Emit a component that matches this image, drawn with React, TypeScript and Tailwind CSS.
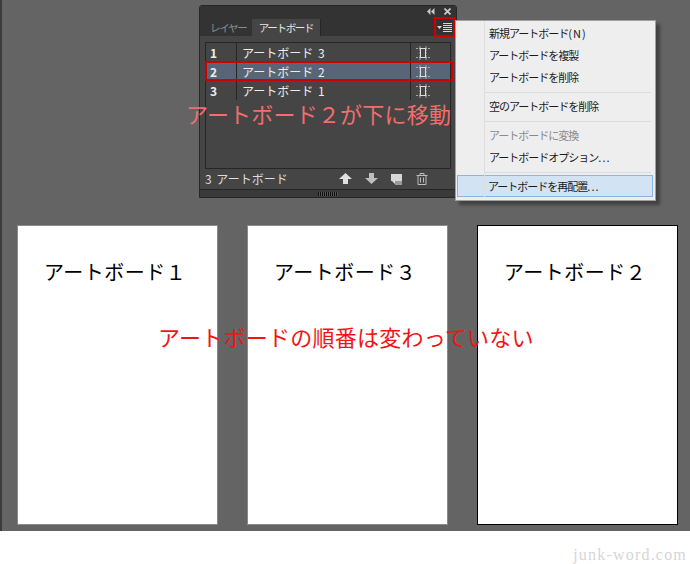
const jp = { fontFamily: '"Noto Sans CJK JP", "Liberation Sans", sans-serif' };

function ArtboardIcon() {
  return (
    <svg width="16" height="16" viewBox="0 0 16 16" fill="none">
      <path d="M1 3.500h14M1 12.500h14M5 1v14M11 1v14" stroke="#a8a8a8" strokeDasharray="2 1" />
      <rect x="5.500" y="3.500" width="5" height="9" stroke="#dcdcdc" />
    </svg>
  );
}

function PanelRow({ no, name, active }: { no: string; name: string; active?: boolean }) {
  return (
    <div className={`flex h-[19px] items-center text-[12px] text-[#ececec] ${active ? "bg-[#5a6478]" : ""}`}>
      <div className="flex h-full w-[31px] items-center border-r border-[#262626] pl-[4px] font-bold">{no}</div>
      <div className="flex h-full w-[174px] items-center border-r border-[#262626] pl-[5px] [word-spacing:2px]">{name}</div>
      <div className="flex flex-1 items-center justify-start pl-[4px]">
        <ArtboardIcon />
      </div>
    </div>
  );
}

function Panel() {
  return (
    <div className="absolute left-[197px] top-[5px] h-[193px] w-[258px] rounded-t-[3px] border border-[#262626] bg-[#454545]" style={jp}>
      {/* title bar */}
      <div className="flex h-[11px] items-center justify-end gap-[9px] bg-[#333333] pr-[5px]">
        <svg width="8" height="7" viewBox="0 0 8 7" fill="#c8c8c8">
          <path d="M3.500 0v7L0 3.500zM7.500 0v7L4 3.500z" />
        </svg>
        <svg width="7" height="7" viewBox="0 0 7 7" stroke="#d0d0d0" strokeWidth="1.6">
          <path d="M0.500 0.500l6 6M6.500 0.500l-6 6" />
        </svg>
      </div>
      {/* tabs */}
      <div className="relative flex h-[19px] bg-[#333333] pt-[2px] text-[10.5px]">
        <div className="flex w-[52px] items-center whitespace-nowrap pl-[10px] tracking-[-1.3px] text-[#8c8c8c]">レイヤー</div>
        <div className="flex w-[69px] items-center justify-center whitespace-nowrap border-r border-[#262626] bg-[#454545] tracking-[-1.3px] text-[#e6e6e6]">
          アートボード
        </div>
        <div className="absolute right-[1px] top-0 flex h-[20px] w-[21px] items-center justify-center border-2 border-[#d00000] bg-[#333333]">
          <svg width="15" height="9" viewBox="0 0 15 9" fill="#d8d8d8">
            <path d="M0 3h5L2.500 6zM6 0h9v1H6zM6 2h9v1H6zM6 4h9v1H6zM6 6h9v1H6zM6 8h9v1H6z" />
          </svg>
        </div>
      </div>
      {/* list */}
      <div className="mx-[5px] mt-[6px] h-[127px] w-[246px] border border-[#262626] bg-[#454545]">
        <PanelRow no="1" name="アートボード 3" />
        <PanelRow no="2" name="アートボード 2" active />
        <PanelRow no="3" name="アートボード 1" />
      </div>
      {/* footer */}
      <div className="flex h-[20px] items-center pl-[5px] text-[12px] text-[#dcdcdc]">
        <span className="w-[134px] [word-spacing:2px]">3 アートボード</span>
        <div className="flex items-center gap-[13px]">
          <svg width="13" height="12" viewBox="0 0 13 12" fill="#e0e0e0">
            <path d="M6.500 0L13 6H9v5H4V6H0z" />
          </svg>
          <svg width="13" height="12" viewBox="0 0 13 12" fill="#bdbdbd">
            <path d="M4 0h5v5h4l-6.500 6L0 5h4z" />
          </svg>
          <svg width="12" height="11" viewBox="0 0 12 11">
            <path d="M0 0h11v7H0z" fill="#d6d6d6" />
            <path d="M4 7h7v4H4z" fill="#9a9a9a" />
            <path d="M1 7h3v3z" fill="#e0e0e0" />
          </svg>
          <svg width="12" height="12" viewBox="0 0 12 12" fill="none" stroke="#bdbdbd">
            <path d="M0.500 2.500h11M4 2.500V0.500h4v2M2 2.500v9h8v-9M4.500 4.500v5M7.500 4.500v5" />
          </svg>
        </div>
      </div>
      {/* grip */}
      <div className="flex h-[8px] items-center justify-center border-t border-[#262626] bg-[#3a3a3a]">
        <div className="h-[4px] w-[20px] bg-[repeating-linear-gradient(90deg,#111111_0,#111111_1px,#555555_1px,#555555_2px)]" />
      </div>
      <div className="absolute bottom-[9px] right-[2px] h-[6px] w-[6px] bg-[radial-gradient(#888888_40%,transparent_45%)] bg-[length:2px_2px]" />
    </div>
  );
}

function MenuSep() {
  return <div className="mb-[2px] ml-[28px] mr-[4px] mt-[4px] h-px bg-[#dcdcdc]" />;
}

function MenuItem({ label, suffix, disabled, active }: { label: string; suffix?: string; disabled?: boolean; active?: boolean }) {
  return (
    <div
      className={`flex h-[22px] items-center text-[11px] tracking-[-1px] ${disabled ? "text-[#8a8a8a]" : "text-[#1a1a1a]"} ${
        active ? "ml-[1px] mr-[2px] border border-[#8db5dc] bg-[#d2e3f3] pl-[30px]" : "pl-[33px]"
      }`}
    >
      {label}
      {suffix && <span className="tracking-[1px]">{suffix}</span>}
    </div>
  );
}

function Menu() {
  return (
    <div
      className="absolute left-[453px] top-[20px] h-[181px] w-[201px] border border-[#a0a0a0] bg-[#eeeeee] shadow-[4px_4px_3px_rgba(0,0,0,0.35)]"
      style={jp}
    >
      <div className="absolute bottom-[3px] left-[28px] top-0 w-px bg-[#dedede]" />
      <div className="pt-px">
        <MenuItem label="新規アートボード" suffix="(N)" />
        <MenuItem label="アートボードを複製" />
        <MenuItem label="アートボードを削除" />
        <MenuSep />
        <MenuItem label="空のアートボードを削除" />
        <MenuSep />
        <MenuItem label="アートボードに変換" disabled />
        <MenuItem label="アートボードオプション" suffix="..." />
        <MenuSep />
        <MenuItem label="アートボードを再配置" suffix="..." active />
      </div>
    </div>
  );
}

function Artboard({ label, selected }: { label: string; selected?: boolean }) {
  return (
    <div
      className={`h-[300px] w-[201px] bg-white pl-[26px] pt-[31px] text-[20px] leading-[30px] tracking-[0.5px] text-black ${
        selected ? "border border-black" : "border border-[#8a8a8a]"
      }`}
    >
      {label}
    </div>
  );
}

export default function App() {
  return (
    <div className="h-[564px] w-[690px] overflow-hidden bg-white" style={jp}>
      <div className="relative h-[531px] border-l-2 border-[#3c3c3c] bg-[#646464]">
        <Panel />
        <Menu />
        <div className="flex gap-[29px] pl-[15px] pt-[225px]">
          <Artboard label="アートボード１" />
          <Artboard label="アートボード３" />
          <Artboard label="アートボード２" selected />
        </div>
        {/* annotations */}
        <div className="absolute left-[184px] top-[97px] text-[22px] leading-[32px] tracking-[0.2px] text-[#f26d6d]">アートボード２が下に移動</div>
        <div className="absolute left-[156px] top-[320px] text-[22px] leading-[32px] tracking-[0.25px] text-[#f01414]">アートボードの順番は変わっていない</div>
        {/* selected row frame */}
        <div className="absolute left-[203px] top-[61px] h-[20px] w-[248px] border-2 border-[#d00000]" />
      </div>
      <div className="flex h-[33px] items-center justify-end pr-[3px] pt-[14px] text-[16px] tracking-[1.2px] text-[#d6d6d6]" style={{ fontFamily: '"Liberation Serif", serif' }}>
        junk-word.com
      </div>
    </div>
  );
}
